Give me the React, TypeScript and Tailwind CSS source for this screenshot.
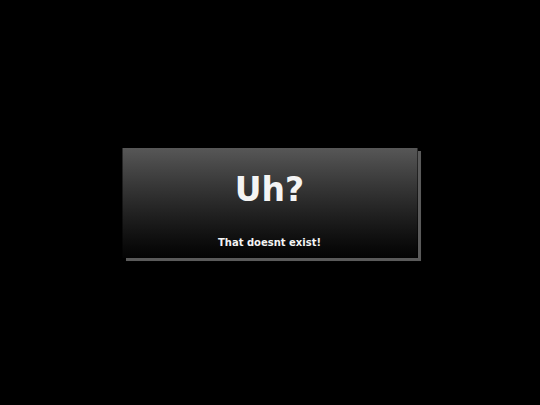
import React from 'react';

export default function App() {
  return (
    <div className="w-[540px] h-[405px] bg-black flex items-center justify-center font-['DejaVu_Sans',sans-serif]">
      {/* Not-found box */}
      <div className="w-[295px] h-[110px] flex flex-col items-center pt-[23px] bg-linear-to-b from-[#575757] to-[#040404] shadow-[3px_3px_0.5px_#5a5a5a] translate-x-[-0.5px]">
        <h1 className="text-[33px] leading-[38px] font-bold text-[#f4f4f4]">Uh?</h1>
        <p className="mt-[28px] text-[10px] leading-[12px] font-bold text-[#f4f4f4]">That doesnt exist!</p>
      </div>
    </div>
  );
}
